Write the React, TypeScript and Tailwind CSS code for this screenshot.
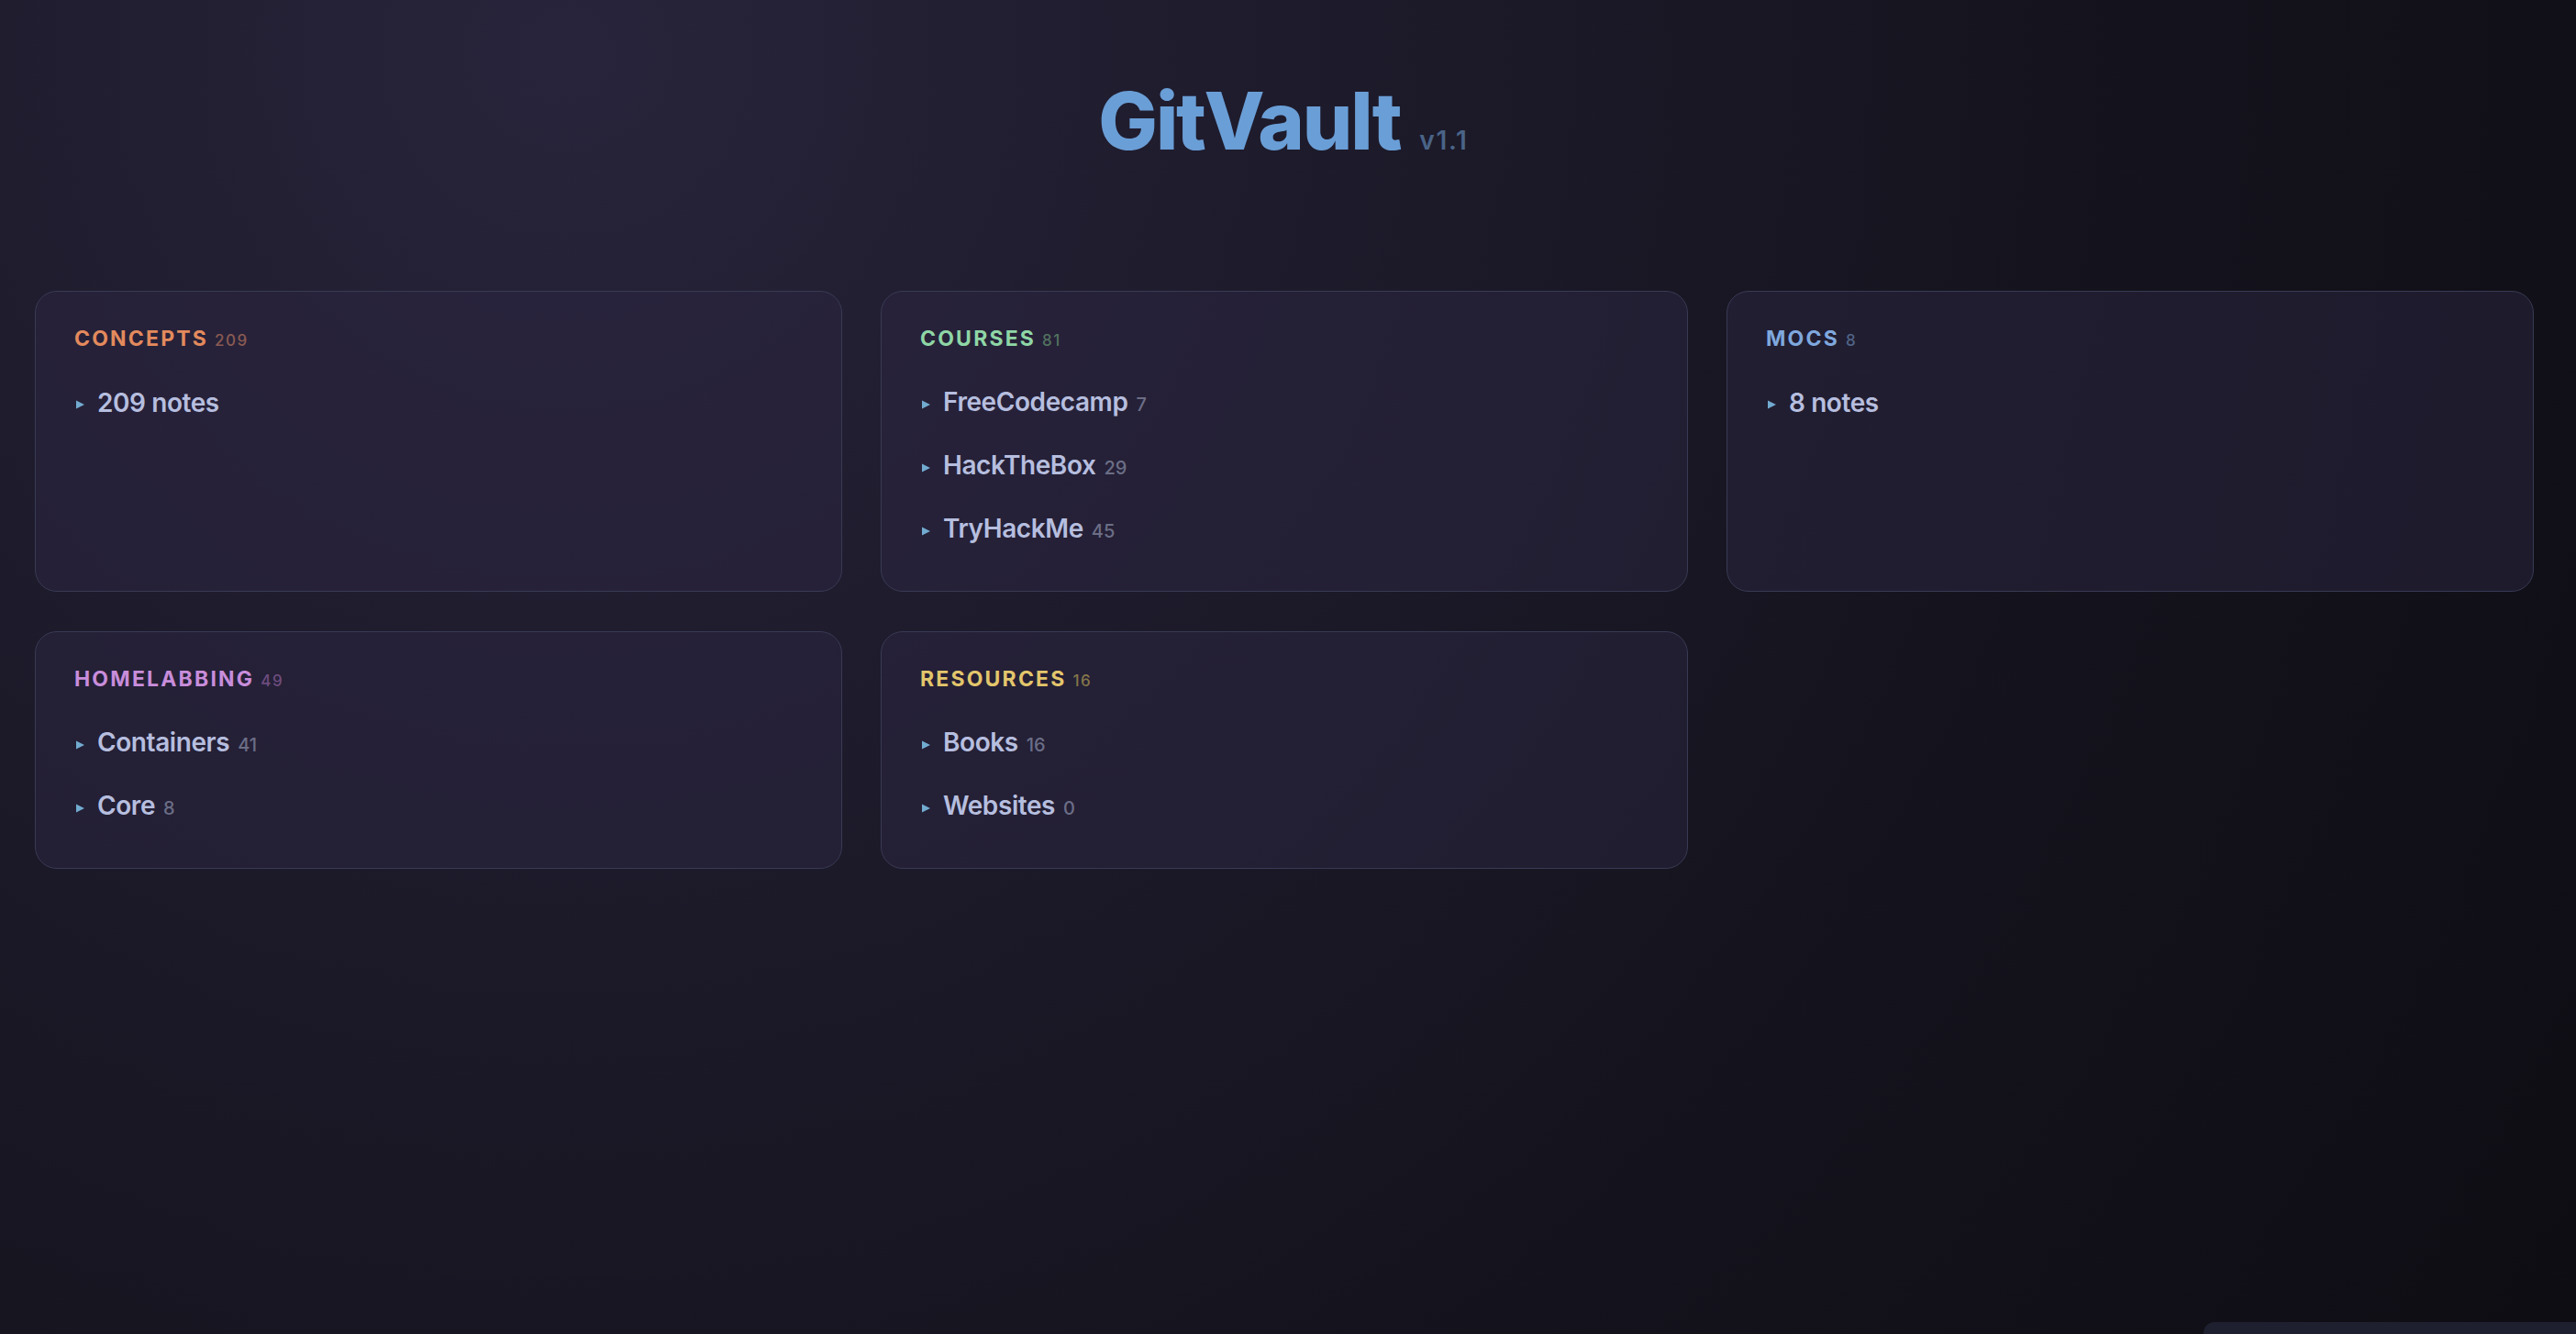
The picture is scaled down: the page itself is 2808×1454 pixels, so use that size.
import React from "react";

type Item = { name: string; count?: number };
type Section = { title: string; count: number; color: string; countColor: string; items: Item[] };

const sections: Section[] = [
  { title: "CONCEPTS", count: 209, color: "text-[#e38a5d]", countColor: "text-[#8a5a52]", items: [{ name: "209 notes" }] },
  {
    title: "COURSES",
    count: 81,
    color: "text-[#8fd6a6]",
    countColor: "text-[#52725f]",
    items: [
      { name: "FreeCodecamp", count: 7 },
      { name: "HackTheBox", count: 29 },
      { name: "TryHackMe", count: 45 },
    ],
  },
  { title: "MOCS", count: 8, color: "text-[#7fa8de]", countColor: "text-[#4f6487]", items: [{ name: "8 notes" }] },
  {
    title: "HOMELABBING",
    count: 49,
    color: "text-[#c88ddb]",
    countColor: "text-[#6e4c7f]",
    items: [
      { name: "Containers", count: 41 },
      { name: "Core", count: 8 },
    ],
  },
  {
    title: "RESOURCES",
    count: 16,
    color: "text-[#e3c66c]",
    countColor: "text-[#85764a]",
    items: [
      { name: "Books", count: 16 },
      { name: "Websites", count: 0 },
    ],
  },
];

function Tri() {
  return (
    <svg width="10" height="10" viewBox="0 0 10 10" className="mt-[4px] ml-[2px] shrink-0">
      <polygon points="0,0.5 9,5 0,9.5" fill="#72abd0" />
    </svg>
  );
}

function Card({ s }: { s: Section }) {
  return (
    <div className="rounded-[24px] border-[1.5px] border-[#383a54] bg-[rgba(44,38,66,0.5)] pl-[42px] pr-[40px] pt-[35px] pb-[47px]">
      <div className="flex items-baseline leading-[32px]">
        <span className={`text-[23px] font-bold tracking-[0.095em] ${s.color}`}>{s.title}</span>
        <span className={`ml-[7px] text-[17px] font-medium tracking-[0.09em] ${s.countColor}`}>{s.count}</span>
      </div>
      <div className="mt-[32px] flex flex-col gap-[29px]">
        {s.items.map((it) => (
          <div key={it.name} className="flex items-center h-[40px]">
            <Tri />
            <div className="ml-[13px] flex items-baseline leading-[40px]">
              <span className="text-[28px] font-semibold text-[#b6bedf] tracking-[-0.015em]">{it.name}</span>
              {it.count !== undefined && (
                <span className="ml-[9px] text-[20px] font-medium text-[#6b6e86]">{it.count}</span>
              )}
            </div>
          </div>
        ))}
      </div>
    </div>
  );
}

export default function App() {
  return (
    <div
      className="relative min-h-[1454px] h-[1454px] w-full overflow-hidden bg-[radial-gradient(circle_at_22%_4%,#28243b_0%,#1e1b2c_30%,#15141e_62%,#0e0d14_100%)]"
      style={{ fontFamily: "Inter, 'Noto Sans', 'Liberation Sans', sans-serif" }}
    >
      <header className="flex justify-center pt-[89px]">
        <div className="mr-[10px] flex items-baseline">
          <h1 className="text-[86px] leading-[86px] font-extrabold tracking-[-0.025em] text-[#6a9ed6]">GitVault</h1>
          <span className="ml-[21px] text-[28px] font-semibold tracking-[0.06em] text-[#4a6487]">v1.1</span>
        </div>
      </header>

      <main className="mt-[142px] pl-[38px] pr-[46px]">
        <div className="grid grid-cols-3 gap-x-[42px] gap-y-[43px] items-stretch">
          {sections.map((s) => (
            <Card key={s.title} s={s} />
          ))}
        </div>
      </main>

      <div className="absolute left-[2402px] top-[1441px] h-[200px] w-[420px] rounded-tl-[12px] bg-[#1e2030]" />
    </div>
  );
}
